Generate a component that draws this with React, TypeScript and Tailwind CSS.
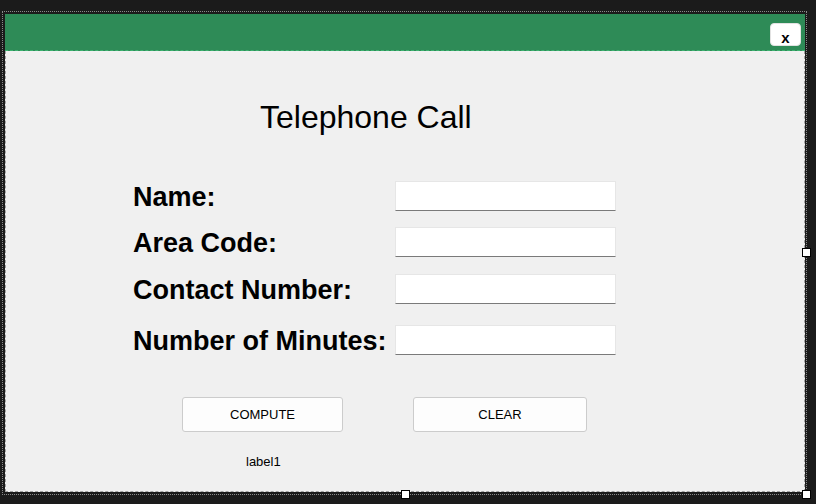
import React from "react";

const rows = [
  { label: "Name:", mt: "mt-[48px]" },
  { label: "Area Code:", mt: "mt-[16px]" },
  { label: "Contact Number:", mt: "mt-[17px]" },
  { label: "Number of Minutes:", mt: "mt-[21px]" },
];

export default function App() {
  return (
    <div className="relative w-[816px] h-[504px] overflow-hidden bg-[#1b1b1b] font-['Liberation_Sans',Arial,sans-serif] text-black">
      <div className="ml-[5px] pt-[14px] w-[800px] h-[492px] flex flex-col">
        <div className="h-[37px] bg-[#2e8b57] border-b border-dashed border-[#3cb371] flex justify-end items-start pr-[4px] pt-[9px]">
          <div className="w-[31px] h-[23px] bg-white rounded-[4px] border border-[#e2e2e2] flex justify-center items-start pt-[6px]">
            <span className="text-[15px] leading-[15px] font-bold">x</span>
          </div>
        </div>
        <div className="flex-1 bg-[#f0f0f0] border-x border-b border-dashed border-[#a0a0a0] flex flex-col">
          <div className="mt-[50px] pl-[254px] text-[32px] leading-[32px] h-[32px] whitespace-nowrap">Telephone Call</div>
          {rows.map((r) => (
            <div key={r.label} className={`${r.mt} pl-[127px] flex items-center h-[30px]`}>
              <div className="mt-[2px] w-[262px] text-[27px] leading-[27px] font-bold whitespace-nowrap">{r.label}</div>
              <div className="w-[221px] h-[30px] bg-white border border-[#e6e6e6] border-b-[#7a7a7a]" />
            </div>
          ))}
          <div className="mt-[42px] pl-[176px] flex">
            <div className="w-[161px] h-[35px] bg-[#fdfdfd] border border-[#cccccc] rounded-[3px] flex items-center justify-center text-[13px]">
              COMPUTE
            </div>
            <div className="ml-[70px] w-[174px] h-[35px] bg-[#fdfdfd] border border-[#cccccc] rounded-[3px] flex items-center justify-center text-[13px]">
              CLEAR
            </div>
          </div>
          <div className="mt-[22px] pl-[240px] text-[13px] leading-[15px]">label1</div>
        </div>
      </div>
      <div className="absolute left-[2px] top-[11px] w-[805px] h-[484px] border border-dotted border-[#8a8a8a] pointer-events-none" />
      <div className="absolute left-[802px] top-[248px] w-[9px] h-[9px] bg-white border border-black" />
      <div className="absolute left-[401px] top-[490px] w-[9px] h-[9px] bg-white border border-black" />
      <div className="absolute left-[802px] top-[490px] w-[9px] h-[9px] bg-white border border-black" />
    </div>
  );
}
